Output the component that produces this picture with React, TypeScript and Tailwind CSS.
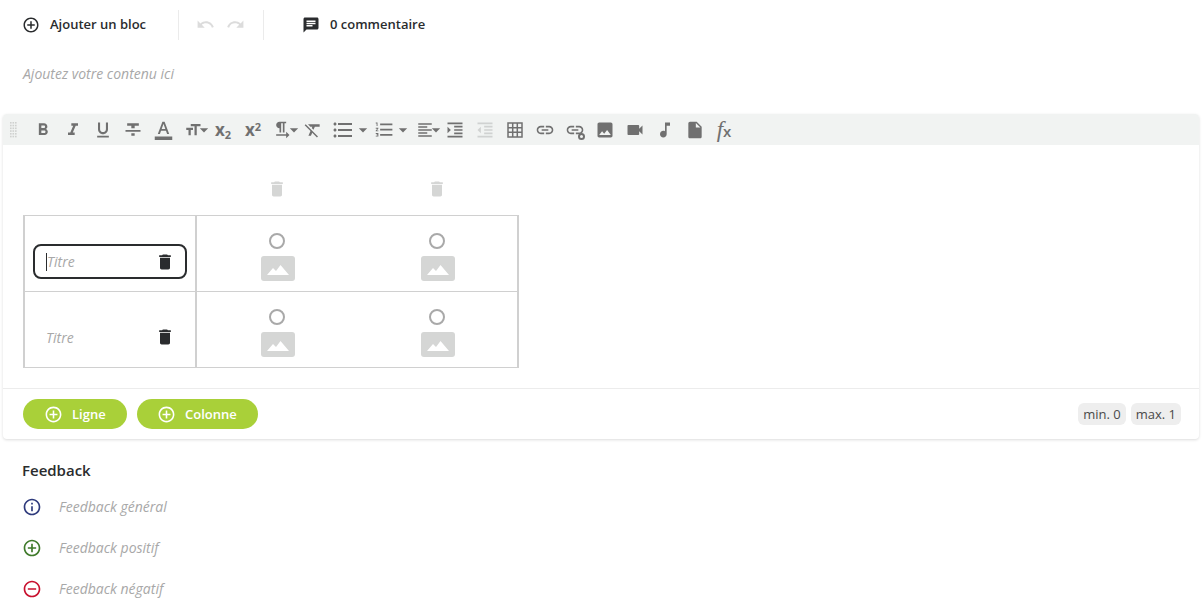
import type { ReactNode } from "react";
import {
  MdAddCircleOutline,
  MdArrowDropDown,
  MdChat,
  MdDelete,
  MdFormatAlignLeft,
  MdFormatBold,
  MdFormatClear,
  MdFormatColorText,
  MdFormatIndentDecrease,
  MdFormatIndentIncrease,
  MdFormatItalic,
  MdFormatListBulleted,
  MdFormatListNumbered,
  MdFormatSize,
  MdFormatStrikethrough,
  MdFormatTextdirectionLToR,
  MdFormatUnderlined,
  MdImage,
  MdInfoOutline,
  MdInsertDriveFile,
  MdLink,
  MdMusicNote,
  MdOutlineRemoveCircleOutline,
  MdRedo,
  MdUndo,
  MdVideocam,
} from "react-icons/md";

const ToolBtn = ({ children, className = "w-[30px] justify-center" }: { children: ReactNode; className?: string }) => (
  <div className={`flex h-full items-center ${className}`}>{children}</div>
);

// caret sits flush against the icon, hanging past the button edge
const Caret = () => <MdArrowDropDown size={20} className="-ml-[8px] -mr-[6px] shrink-0" />;

const Grip = () => (
  <svg width="7" height="16" viewBox="0 0 7 16" className="text-[#cfd1cf]" fill="currentColor">
    {[0, 2.5, 5].map((x) =>
      [0, 2.75, 5.5, 8.25, 11, 13.75].map((y) => <rect key={`${x}-${y}`} x={x} y={y} width="1.6" height="1.6" />),
    )}
  </svg>
);

const Toolbar = () => (
  <div className="flex h-[31px] items-center rounded-t bg-[#f1f3f2] text-[#707070]">
    <div className="flex w-[25px] justify-center pr-[5px]">
      <Grip />
    </div>
    <ToolBtn><MdFormatBold size={20} /></ToolBtn>
    <ToolBtn><MdFormatItalic size={20} /></ToolBtn>
    <ToolBtn><MdFormatUnderlined size={20} /></ToolBtn>
    <ToolBtn><MdFormatStrikethrough size={20} /></ToolBtn>
    <ToolBtn><MdFormatColorText size={21} /></ToolBtn>
    <ToolBtn className="w-[30px] justify-end"><MdFormatSize size={18} className="shrink-0" /><Caret /></ToolBtn>
    <ToolBtn><span className="font-['Open_Sans',sans-serif] text-[17px] font-bold leading-none">x<sub className="text-[11px]">2</sub></span></ToolBtn>
    <ToolBtn><span className="font-['Open_Sans',sans-serif] text-[17px] font-bold leading-none">x<sup className="text-[11px]">2</sup></span></ToolBtn>
    <ToolBtn className="w-[30px] justify-end"><MdFormatTextdirectionLToR size={20} className="shrink-0" /><Caret /></ToolBtn>
    <ToolBtn><MdFormatClear size={20} /></ToolBtn>
    <ToolBtn className="w-[40px] justify-start pl-[3px]"><MdFormatListBulleted size={24} className="shrink-0" /><MdArrowDropDown size={20} className="-ml-[2px] shrink-0" /></ToolBtn>
    <ToolBtn className="w-[42px] justify-start pl-[6px]"><MdFormatListNumbered size={21} className="shrink-0" /><MdArrowDropDown size={20} className="-ml-[2px] shrink-0" /></ToolBtn>
    <ToolBtn className="w-[30px] justify-end"><MdFormatAlignLeft size={18} className="shrink-0" /><Caret /></ToolBtn>
    <ToolBtn><MdFormatIndentIncrease size={20} /></ToolBtn>
    <ToolBtn><MdFormatIndentDecrease size={20} className="text-[#d0d2d1]" /></ToolBtn>
    <ToolBtn>
      <svg width="16" height="16" viewBox="0 0 16 16" fill="none" stroke="currentColor" strokeWidth="1.5">
        <rect x="1" y="1" width="14" height="14" />
        <path d="M5.7 1v14M10.3 1v14M1 5.7h14M1 10.3h14" />
      </svg>
    </ToolBtn>
    <ToolBtn><MdLink size={20} /></ToolBtn>
    <ToolBtn>
      <div className="relative">
        <MdLink size={20} className="block" />
        <span className="absolute bottom-[0px] right-[0px] h-[7px] w-[7px] rounded-full border-2 border-[#707070] bg-[#f1f3f2]" />
      </div>
    </ToolBtn>
    <ToolBtn><MdImage size={20} /></ToolBtn>
    <ToolBtn><MdVideocam size={20} /></ToolBtn>
    <ToolBtn><MdMusicNote size={20} /></ToolBtn>
    <ToolBtn><MdInsertDriveFile size={20} /></ToolBtn>
    <ToolBtn>
      <span className="-ml-[2px] font-['Liberation_Serif',serif] text-[23px] italic leading-none">
        f<span className="font-['Open_Sans',sans-serif] text-[15px] font-semibold not-italic">x</span>
      </span>
    </ToolBtn>
  </div>
);

const ImagePlaceholder = () => (
  <div className="ml-[1px] flex h-[25px] w-[34px] items-end justify-center rounded-[3px] bg-[#d5d6d5] pb-[6px]">
    <svg width="22" height="10" viewBox="0 0 22 10" fill="#fff">
      <path d="M0 10 L6 3 L9 6 L13.5 0 L22 10 Z" />
    </svg>
  </div>
);

const OptionCell = () => (
  <div className="flex w-[160px] flex-col items-center gap-[7px]">
    <span className="h-[16px] w-[16px] rounded-full border-2 border-[#a9a9a9]" />
    <ImagePlaceholder />
  </div>
);

const Row = ({ focused, last }: { focused?: boolean; last?: boolean }) => (
  <div className={`flex ${last ? "h-[75px]" : "h-[76px] border-b border-[#d0d0d0]"}`}>
    <div className={`flex w-[172px] items-center border-r-2 border-[#d0d0d0] pl-[8px] ${last ? "pt-[16px]" : "pt-[15px]"}`}>
      <div
        className={`flex h-[35px] w-[154px] items-center justify-between rounded-[8px] border-2 pl-[11px] pr-[10px] ${
          focused ? "border-[#2a2c2e] pt-[2px]" : "border-transparent"
        }`}
      >
        <span className={`text-[14px] italic leading-[18px] text-[#a8a8a8] ${focused ? "border-l border-[#2a2c2e]" : ""}`}>
          Titre
        </span>
        <MdDelete size={20} className={`text-[#2a2c2e] ${last ? "-mt-[2px]" : ""}`} />
      </div>
    </div>
    <div className="flex items-start pt-[17px]">
      <OptionCell />
      <OptionCell />
    </div>
  </div>
);

const PillButton = ({ label, className }: { label: string; className: string }) => (
  <button className={`flex h-[30px] items-center rounded-full bg-[#a9d039] text-[13px] font-semibold text-white ${className}`}>
    <MdAddCircleOutline size={19} className="mr-[9px]" />
    <span className="pt-[1px]">{label}</span>
  </button>
);

const Badge = ({ children }: { children: ReactNode }) => (
  <span className="flex h-[22px] items-center rounded-[6px] bg-[#eeeeee] px-[5px] pt-[1px] text-[13px] text-[#4a4a4a]">{children}</span>
);

const FeedbackRow = ({ icon, label }: { icon: ReactNode; label: string }) => (
  <div className="flex h-[41px] items-center gap-[17px] pl-[22px]">
    {icon}
    <span className="text-[14px] italic text-[#a8a8a8]">{label}</span>
  </div>
);

export default function App() {
  return (
    <div className="h-[600px] w-[1202px] overflow-hidden bg-white font-['Open_Sans',sans-serif] text-[#2a2c2e]">
      <div className="flex h-[48px] items-center pl-[22px] pt-[1px]">
        <MdAddCircleOutline size={18} className="mr-[10px]" />
        <span className="w-[128px] text-[13px] font-semibold">Ajouter un bloc</span>
        <div className="h-[30px] w-px bg-[#ebebeb]" />
        <div className="flex w-[84px] items-center gap-[11px] pl-[17px] text-[#dcdcdc]">
          <MdUndo size={19} />
          <MdRedo size={19} />
        </div>
        <div className="h-[30px] w-px bg-[#ebebeb]" />
        <MdChat size={18} className="ml-[38px] mr-[10px]" />
        <span className="text-[13px] font-semibold">0 commentaire</span>
      </div>

      <div className="flex h-[50px] items-center pl-[23px] text-[14px] italic text-[#a8a8a8]">Ajoutez votre contenu ici</div>

      <div className="mx-[3px] mt-[16px] h-[325px] rounded bg-white shadow-[0_1px_3px_rgba(0,0,0,0.14)]">
        <Toolbar />
        <div className="h-[244px] border-b border-[#ececec] pl-[20px]">
          <div className="flex h-[70px] items-center pl-[174px] text-[#d5d6d5]">
            <div className="flex w-[160px] justify-center pt-[18px]"><MdDelete size={20} /></div>
            <div className="flex w-[160px] justify-center pt-[18px]"><MdDelete size={20} /></div>
          </div>
          <div className="w-[496px] border border-x-2 border-[#d0d0d0]">
            <Row focused />
            <Row last />
          </div>
        </div>
        <div className="flex h-[50px] items-center justify-between pl-[20px] pr-[18px]">
          <div className="flex gap-[10px]">
            <PillButton label="Ligne" className="w-[104px] pl-[21px]" />
            <PillButton label="Colonne" className="w-[121px] pl-[20px]" />
          </div>
          <div className="flex gap-[5px]">
            <Badge>min. 0</Badge>
            <Badge>max. 1</Badge>
          </div>
        </div>
      </div>

      <div className="pl-[22px] pt-[20px] text-[15px] font-semibold leading-[22px]">Feedback</div>
      <div className="pt-[5px]">
        <FeedbackRow icon={<MdInfoOutline size={20} className="text-[#2e3a7c]" />} label="Feedback général" />
        <FeedbackRow icon={<MdAddCircleOutline size={20} className="text-[#3f7a2a]" />} label="Feedback positif" />
        <FeedbackRow icon={<MdOutlineRemoveCircleOutline size={20} className="text-[#c8102e]" />} label="Feedback négatif" />
      </div>
    </div>
  );
}
